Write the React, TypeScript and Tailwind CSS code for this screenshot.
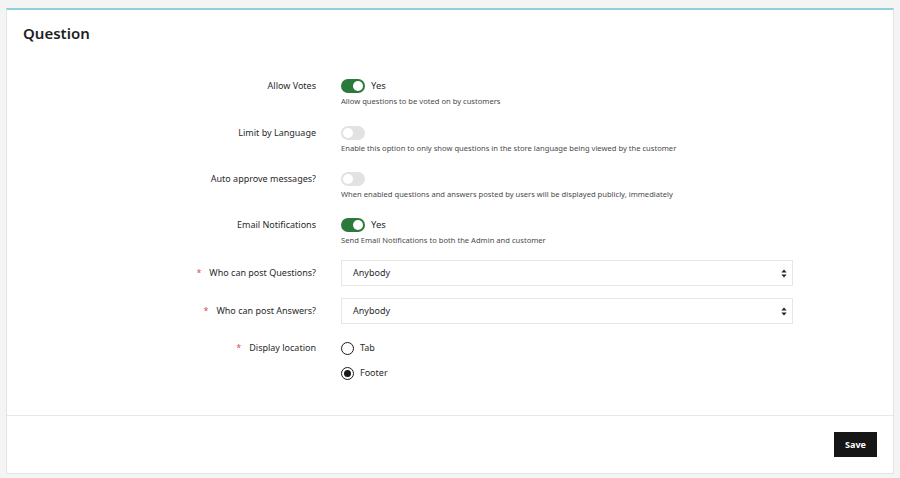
import React from "react";

const font = { fontFamily: '"Noto Sans", "IBM Plex Sans", Arial, sans-serif' };

function Toggle({ on }: { on: boolean }) {
  return (
    <div
      className={`relative h-[14px] w-[24px] shrink-0 rounded-full ${on ? "bg-[#2c7a3b]" : "bg-[#e2e2e2]"}`}
    >
      <div
        className={`absolute top-[2px] h-[10px] w-[10px] rounded-full bg-white ${on ? "left-[12px]" : "left-[2px]"}`}
      />
    </div>
  );
}

function Label({ text, required }: { text: string; required?: boolean }) {
  return (
    <div className="flex w-[309px] shrink-0 items-center justify-end text-[9px] leading-[14px] text-[#2a2a2a]">
      {required && <span className="mr-[8px] text-[#d9534f]">*</span>}
      <span>{text}</span>
    </div>
  );
}

function ToggleRow({ label, on, desc }: { label: string; on: boolean; desc: string }) {
  return (
    <div className="flex items-start">
      <Label text={label} />
      <div className="ml-[25px] flex flex-col">
        <div className="flex h-[14px] items-center">
          <Toggle on={on} />
          {on && <span className="ml-[6px] text-[9.5px] leading-[14px] text-[#2a2a2a]">Yes</span>}
        </div>
        <div className="mt-[3px] text-[7.6px] leading-[11px] text-[#4a4a4a]">{desc}</div>
      </div>
    </div>
  );
}

function Select({ label }: { label: string }) {
  return (
    <div className="flex items-center">
      <Label text={label} required />
      <div className="ml-[25px] flex h-[26px] w-[452px] items-center justify-between border border-[#e6e6e6] bg-white pl-[11px] pr-[4px] text-[9px] text-[#2a2a2a]">
        <span>Anybody</span>
        <svg width="6" height="9" viewBox="0 0 6 9" className="mr-[1px]">
          <path d="M3 0.5 L5.6 3.6 H0.4 Z" fill="#222" />
          <path d="M3 8.5 L5.6 5.4 H0.4 Z" fill="#222" />
        </svg>
      </div>
    </div>
  );
}

function Radio({ checked, text }: { checked: boolean; text: string }) {
  return (
    <div className="flex h-[14px] items-center">
      <div className="flex h-[13px] w-[13px] items-center justify-center rounded-full border-[1.5px] border-[#1a1a1a] bg-white">
        {checked && <div className="h-[7px] w-[7px] rounded-full bg-[#1a1a1a]" />}
      </div>
      <span className="ml-[6px] text-[9px] leading-[14px] text-[#2a2a2a]">{text}</span>
    </div>
  );
}

export default function App() {
  return (
    <div className="h-[478px] w-[900px] bg-[#f4f4f4] pt-[8px] pl-[6px]" style={font}>
      <div className="flex h-[466px] w-[888px] flex-col border-x border-b border-[#e4e4e4] border-t-2 border-t-[#8ecfe0] bg-white">
        <div className="pl-[16px] pt-[13px] text-[15px] font-semibold leading-[20px] text-[#1f1f1f]">
          Question
        </div>
        <div className="mt-[36px] flex flex-col">
          <ToggleRow label="Allow Votes" on desc="Allow questions to be voted on by customers" />
          <div className="mt-[19px]">
            <ToggleRow
              label="Limit by Language"
              on={false}
              desc="Enable this option to only show questions in the store language being viewed by the customer"
            />
          </div>
          <div className="mt-[18px]">
            <ToggleRow
              label="Auto approve messages?"
              on={false}
              desc="When enabled questions and answers posted by users will be displayed publicly, immediately"
            />
          </div>
          <div className="mt-[18px]">
            <ToggleRow
              label="Email Notifications"
              on
              desc="Send Email Notifications to both the Admin and customer"
            />
          </div>
          <div className="mt-[14px]">
            <Select label="Who can post Questions?" />
          </div>
          <div className="mt-[12px]">
            <Select label="Who can post Answers?" />
          </div>
          <div className="mt-[17px] flex items-start">
            <Label text="Display location" required />
            <div className="ml-[25px] flex flex-col gap-[11px]">
              <Radio checked={false} text="Tab" />
              <Radio checked text="Footer" />
            </div>
          </div>
        </div>
        <div className="mt-auto flex h-[58px] items-center justify-end border-t border-[#e8e8e8] pr-[16px]">
          <button className="h-[25px] w-[43px] bg-[#161616] text-[9px] font-bold text-white">Save</button>
        </div>
      </div>
    </div>
  );
}
